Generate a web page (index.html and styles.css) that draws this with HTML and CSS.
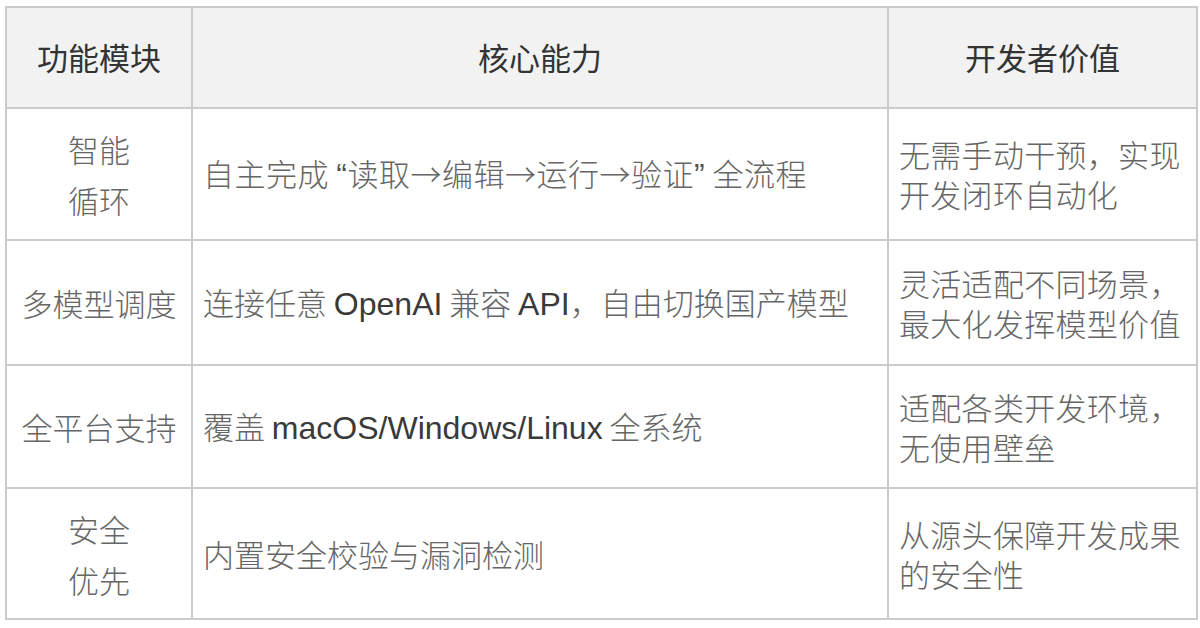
FILE: index.html
```html
<!DOCTYPE html>
<html lang="zh-CN">
<head>
<meta charset="utf-8">
<title>功能模块</title>
<link rel="stylesheet" href="styles.css">
</head>
<body>
<table class="tbl">
  <colgroup>
    <col class="c1">
    <col class="c2">
    <col class="c3">
  </colgroup>
  <thead>
    <tr class="head">
      <th>功能模块</th>
      <th>核心能力</th>
      <th>开发者价值</th>
    </tr>
  </thead>
  <tbody>
    <tr class="r1">
      <td class="mod">智能<br>循环</td>
      <td class="cap wide">自主完成 <span class="q">“</span>读取→编辑→运行→验证<span class="q">”</span> 全流程</td>
      <td class="val">无需手动干预，实现<br>开发闭环自动化</td>
    </tr>
    <tr class="r2">
      <td class="mod">多模型调度</td>
      <td class="cap">连接任意 <span class="lat">OpenAI</span> 兼容 <span class="lat">API</span>，自由切换国产模型</td>
      <td class="val">灵活适配不同场景，<br>最大化发挥模型价值</td>
    </tr>
    <tr class="r3">
      <td class="mod">全平台支持</td>
      <td class="cap">覆盖 <span class="lat">macOS/Windows/Linux</span> 全系统</td>
      <td class="val">适配各类开发环境，<br>无使用壁垒</td>
    </tr>
    <tr class="r4">
      <td class="mod">安全<br>优先</td>
      <td class="cap">内置安全校验与漏洞检测</td>
      <td class="val">从源头保障开发成果<br>的安全性</td>
    </tr>
  </tbody>
</table>
</body>
</html>
```

FILE: styles.css
```css
html, body {
  margin: 0;
  padding: 0;
  background: #ffffff;
}
body {
  font-family: "Noto Sans CJK SC", "Liberation Sans", sans-serif;
  padding: 6px 0 0 5px;
}
.tbl {
  border-collapse: collapse;
  width: 1191px;
  table-layout: fixed;
}
.c1 { width: 186px; }
.c2 { width: 696px; }
.c3 { width: 309px; }
.tbl th, .tbl td {
  border: 2px solid #cbcbcb;
  padding: 0;
  vertical-align: middle;
}
.tbl th {
  background: #f2f2f2;
  color: #333333;
  font-size: 31px;
  font-weight: 400;
  text-align: center;
  height: 96px;
  padding-bottom: 3px;
}
.tbl td {
  color: #666666;
  font-size: 31px;
  font-weight: 300;
  white-space: nowrap;
}
.r1 td { height: 130px; }
.r2 td { height: 123px; }
.r3 td { height: 121px; }
.r4 td { height: 129px; }
.mod {
  text-align: center;
  line-height: 51px;
}
.cap {
  padding-left: 10px !important;
  line-height: 40px;
}
.wide {
  letter-spacing: 0.5px;
}
.val {
  padding-left: 10px !important;
  line-height: 40px;
  letter-spacing: 0.3px;
}
.lat {
  font-family: "Liberation Sans", "Noto Sans CJK SC", sans-serif;
  font-size: 32px;
  color: #3a3a3a;
  font-weight: 400;
}
.q {
  font-family: "Liberation Sans", sans-serif;
  font-size: 32px;
  color: #555555;
}
```
